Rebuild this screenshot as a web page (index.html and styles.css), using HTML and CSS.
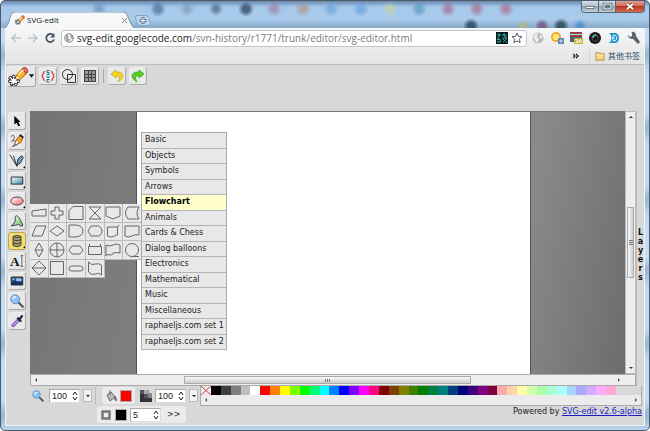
FILE: index.html
```html
<!DOCTYPE html>
<html lang="en">
<head>
<meta charset="utf-8">
<title>SVG-edit</title>
<link rel="stylesheet" href="styles.css">
</head>
<body>
<svg class="defs" aria-hidden="true">
  <defs>
    <linearGradient id="blue" x1="0" y1="0" x2="1" y2="1"><stop offset="0" stop-color="#fff"/><stop offset="1" stop-color="#3e8ea8"/></linearGradient>
    <linearGradient id="pink" x1="0" y1="0" x2="1" y2="1"><stop offset="0" stop-color="#fff"/><stop offset="1" stop-color="#f66"/></linearGradient>
    <linearGradient id="green" x1="0" y1="0" x2="1" y2="1"><stop offset="0" stop-color="#fff"/><stop offset="1" stop-color="#5fc05f"/></linearGradient>
    <symbol id="logo" viewBox="0 0 22 20">
      <path d="M7 13l3-6 6-6q3-1 4 2t-1 4l-6 6-5 3z" fill="#f7b52c" stroke="#a8540f"/>
      <path d="M15 2q3-3 5 0t-1 5z" fill="#ee6a7c" stroke="#a33"/>
      <path d="M11 8l5-5" stroke="#ffe98a" stroke-width="2"/>
      <path d="M7 14l2-4 3 3z" fill="#fff0c8"/>
      <g fill="#fff" stroke="#111"><circle cx="6" cy="10" r="1.6"/><circle cx="2.500" cy="11.500" r="1.600"/><circle cx="2" cy="15" r="1.600"/><circle cx="4" cy="18" r="1.600"/><circle cx="8" cy="18" r="1.600"/><circle cx="10.500" cy="15" r="1.600"/></g>
      <path d="M6 11v7M3 12l6 5M2 15h8M9 12l-6 6" stroke="#111" stroke-width="3"/>
      <path d="M6 11v7M3 12l6 5M2 15h8M9 12l-6 6" stroke="#fff" stroke-width="1.500"/>
    </symbol>
    <symbol id="glass" viewBox="0 0 16 16">
      <path d="M9.500 9.500l5 5" stroke="#555" stroke-width="2.500" stroke-linecap="round"/>
      <circle cx="6" cy="6" r="5" fill="#8fc3f7" stroke="#5c88b8"/>
      <path d="M3 6q1-3 4-3" stroke="#fff" stroke-width="1.500" fill="none"/>
    </symbol>
  </defs>
</svg>
<div class="window">
  <header class="titlebar">
    <div class="tab">
      <svg class="tab-shape" viewBox="0 0 131 16" preserveAspectRatio="none"><path d="M0 16q2-1 3-4l3-9q1-3 4-3h109q3 0 4 3l4 9q1 3 4 4" fill="#f5f7f9" stroke="#7f95ac"/></svg>
      <svg class="favicon"><use href="#logo"/></svg>
      <span class="tab-title">SVG-edit</span>
      <button class="tab-close" aria-label="Close tab"><svg viewBox="0 0 5 5"><path d="M0 0l5 5M5 0L0 5" stroke="#888"/></svg></button>
    </div>
    <button class="new-tab" aria-label="New tab"><svg viewBox="0 0 16 11"><path d="M1 .5h10q2 0 3 3l1.500 5q0 2-2 2H5q-2 0-3-3L.500 3z" fill="#bcd3ea" stroke="#8aa0b8"/><path d="M8 2v7M4.500 5.500h7" stroke="#6580a0" stroke-width="3"/><path d="M8 3v5M5.500 5.500h5" stroke="#fff"/></svg></button>
    <div class="win-buttons">
      <button aria-label="Minimize"><svg viewBox="0 0 16 11"><path d="M4 5.500h8v2H4z" fill="#fff" stroke="#566" stroke-width=".8"/></svg></button>
      <button aria-label="Maximize"><svg viewBox="0 0 16 11"><path d="M5 3h7v5H5z" fill="none" stroke="#566" stroke-width="2.500"/><path d="M5 3h7v5H5z" fill="#678" stroke="#fff"/></svg></button>
      <button class="win-close" aria-label="Close"><svg viewBox="0 0 28 11"><path d="M11 3l6 5M17 3l-6 5" stroke="#733" stroke-width="3"/><path d="M11 3l6 5M17 3l-6 5" stroke="#fff" stroke-width="1.800"/></svg></button>
    </div>
  </header>

  <div class="browser">
    <nav class="address-row">
      <button aria-label="Back"><svg viewBox="0 0 12 12"><path d="M11 6H2M6 2L2 6l4 4" stroke="#c3c6c9" stroke-width="1.600" fill="none"/></svg></button>
      <button aria-label="Forward"><svg viewBox="0 0 12 12"><path d="M1 6h9M6 2l4 4-4 4" stroke="#c3c6c9" stroke-width="1.600" fill="none"/></svg></button>
      <button aria-label="Reload"><svg viewBox="0 0 12 12"><path d="M9 3a4 4 0 1 0 1 4.500" stroke="#4a5566" stroke-width="1.800" fill="none"/><path d="M10.500 1v4.500H6z" fill="#4a5566"/></svg></button>
      <div class="omnibox">
        <svg class="i10" viewBox="0 0 10 10"><circle cx="5" cy="5" r="4.300" fill="#eee" stroke="#888"/><path d="M2 2q3 0 2 2t1 2-1 3L2 6zM6 1q1 2 3 2v3L7 5z" fill="#999"/></svg>
        <span class="url"><b>svg-edit.googlecode.com</b>/svn-history/r1771/trunk/editor/svg-editor.html</span>
        <svg class="i12" viewBox="0 0 12 12"><path d="M0 0h12v12H0z" fill="#061616"/><path d="M1 3h4M3 1v4l-2 3 3-1v3M1 10h4M6 3h5M8 1v3l3 2M6 6h5l-4 4M7 7l4 4" stroke="#29aaa0" fill="none"/></svg>
        <svg class="i12" viewBox="0 0 12 12"><path d="M6 1l1.500 3.300 3.500.4-2.600 2.400.7 3.500L6 8.900l-3.100 1.700.7-3.500L1 4.700l3.500-.4z" fill="#fff" stroke="#556"/></svg>
      </div>
      <div class="extensions">
        <svg viewBox="0 0 14 14"><circle cx="7" cy="7" r="5.500" fill="#bbb"/><path d="M2 6q2-4 5-4L6 6l2 2-2 4-2-3zM9 3l3 3-3 2z" fill="#eee"/></svg>
        <svg viewBox="0 0 14 14"><circle cx="6" cy="6" r="5" fill="#e9a526"/><circle cx="6" cy="6" r="3.300" fill="#ffe57b"/><rect x="8" y="7" width="6" height="6" rx="1" fill="#5e81b5"/><path d="M10 9h2v2h-2z" fill="none" stroke="#fff" stroke-width=".7"/></svg>
        <svg viewBox="0 0 14 14"><path d="M1 1h12v10H1z" fill="#49617e"/><path d="M1 2h12M1 5h12" stroke="#b92e43" stroke-width="1.500"/><path d="M1 3.500h12" stroke="#8fb"/><rect x="5" y="7" width="9" height="6" rx="1" fill="#c0b12b"/><text x="6" y="12" class="badge">20</text></svg>
        <svg viewBox="0 0 14 14"><circle cx="7" cy="7" r="6" fill="#191b20"/><circle cx="7" cy="7" r="3" fill="none" stroke="#444"/><path d="M5 7q0-3 3-3" stroke="#44d58b" stroke-width="1.500" fill="none"/><path d="M8 4l2 2" stroke="#d55"/></svg>
        <svg viewBox="0 0 14 14"><path d="M2 2h5q5 0 5 5t-5 5H2l2-2V4z" fill="#1d91c9"/><path d="M6 4v6M6 4q4 0 4 3t-4 3M4 7h4" stroke="#d9f4ff" fill="none"/></svg>
        <svg viewBox="0 0 14 14"><path d="M2 4l2 2 2-1V2L5 1q5-1 5 4l4 6-2 2-5-5Q2 8 2 4z" fill="#5b6471"/></svg>
      </div>
    </nav>
    <div class="bookmarks">
      <button class="more" aria-label="More bookmarks"><svg viewBox="0 0 6 6"><path d="M0 1l2 2-2 2M3 1l2 2-2 2" fill="none" stroke="#111" stroke-width="1.200"/></svg></button>
      <a href="#"><svg viewBox="0 0 11 9"><path d="M1 8.500h9v-7H5.500L4.500.5H1z" fill="#f9d789" stroke="#b68a39"/><path d="M1.500 3h8" stroke="#fff1c6"/></svg>其他书签</a>
    </div>

    <div class="toolbar">
      <button class="main-menu" aria-label="Main menu"><svg class="logo"><use href="#logo"/></svg><svg class="arrow" viewBox="0 0 6 4"><path d="M0 0h6L3 4z"/></svg></button>
      <button class="tool" aria-label="Edit source"><svg viewBox="0 0 16 16"><path d="M4.500 3L2 8l2.500 5M11.500 3L14 8l-2.500 5" fill="none" stroke="#d4373c" stroke-width="1.200"/><path d="M9.500 2.500H7v2h2v2H6.500M6.500 8L8 10l1.500-2M9.500 11.500H7v2.500h2.500" fill="none" stroke="#167b82"/></svg></button>
      <button class="tool" aria-label="Wireframe"><svg viewBox="0 0 16 16"><circle cx="6.500" cy="6.500" r="5" fill="none" stroke="#333"/><path d="M6.500 6.500h8v8h-8z" fill="none" stroke="#333"/></svg></button>
      <button class="tool" aria-label="Grid"><svg viewBox="0 0 16 16"><path d="M2 2h12v12H2z" fill="#999"/><path d="M2.500 2v12M6.500 2v12M9.500 2v12M13.500 2v12M2 2.500h12M2 6.500h12M2 9.500h12M2 13.500h12" stroke="#444"/></svg></button>
      <span class="divider"></span>
      <button class="tool" aria-label="Undo"><svg viewBox="0 0 16 16"><path d="M7 2L2 6l5 4V8q6-1 2 6 5-3 5-6 0-4-7-4z" fill="#f2d51c" stroke="#c9a822" stroke-width=".8"/></svg></button>
      <button class="tool" aria-label="Redo"><svg viewBox="0 0 16 16"><path d="M9 2l5 4-5 4V8Q3 7 7 14 2 11 2 8q0-4 7-4z" fill="#54ce27" stroke="#3eaa26" stroke-width=".8"/></svg></button>
    </div>

    <main class="editor">
      <div class="tools">
        <button class="tool" aria-label="Select"><svg viewBox="0 0 18 18"><path d="M6 3v10l2.500-2 2 4 2-1-2-4H13z"/></svg></button>
        <button class="tool" aria-label="Pencil"><svg viewBox="0 0 18 18"><path d="M2 4q4-3 4 1T3 9q5-1 4 2t-3 4 6-2" fill="none" stroke="#555"/><path d="M7 13l1-5 4-5 4 2-3 6z" fill="#f2a329" stroke="#854c15"/><path d="M7 13l1-4 3 2z" fill="#fff"/><path d="M12 2l4 3" stroke="#222" stroke-width="2"/></svg></button>
        <button class="tool more-tools" aria-label="Line"><svg viewBox="0 0 18 18"><path d="M1 2l8 13L5 3" stroke="#222" fill="none"/><path d="M9 14l1-7 4-4 2 2-3 6z" fill="#6fa0bd" stroke="#222"/></svg></button>
        <button class="tool more-tools" aria-label="Rectangle"><svg viewBox="0 0 18 18"><path d="M2.500 4.500h13v8h-13z" fill="url(#blue)" stroke="#222"/></svg></button>
        <button class="tool more-tools" aria-label="Ellipse"><svg viewBox="0 0 18 18"><ellipse cx="9" cy="9" rx="7" ry="4.500" fill="url(#pink)" stroke="#333"/></svg></button>
        <button class="tool" aria-label="Path"><svg viewBox="0 0 18 18"><path d="M2.500 14.500Q8 11 7 5q1-4 4 0 2 3 4 7l.5 2.500h-3q-1-3-4-1z" fill="url(#green)" stroke="#333"/></svg></button>
        <button class="tool active more-tools" aria-label="Shape library"><svg viewBox="0 0 18 18"><path d="M4.500 4v10q4.500 3 9 0V4q-4.500-3-9 0zM4.500 4q4.500 3 9 0M4.500 7.500q4.500 2.500 9 0M4.500 11q4.500 2.500 9 0" fill="#a9a56b" stroke="#333"/></svg></button>
        <button class="tool" aria-label="Text"><svg viewBox="0 0 18 18"><text x="1" y="15" class="text-glyph">A</text><path d="M13 3h3M14.500 3v12M13 15h3" stroke="#555" fill="none"/></svg></button>
        <button class="tool" aria-label="Image"><svg viewBox="0 0 18 18"><path d="M2.500 4.500h13v9h-13z" fill="#285694" stroke="#222"/><path d="M4 6h2v2H4zM8 6h6v3H8z" fill="#94c4e8"/><path d="M3 11l4-2 4 2 4-1v3H3z" fill="#122f5f"/></svg></button>
        <button class="tool" aria-label="Zoom"><svg viewBox="-1 -1 18 18"><use href="#glass" width="16" height="16"/></svg></button>
        <button class="tool" aria-label="Eyedropper"><svg viewBox="0 0 18 18"><path d="M3.500 15q-1-2 2-4l4-4 2 2-4 4q-1 3-4 2z" fill="#b68cef" stroke="#63339b"/><path d="M10 6l3 3M12 7l2.500-3.500" stroke="#241c33" stroke-width="2.500" stroke-linecap="round"/></svg></button>
      </div>

      <div class="workarea">
        <div class="canvas-view"><div class="page"></div></div>
        <div class="vscroll"><span class="up"></span><span class="vthumb"></span><span class="down"></span></div>
        <div class="hscroll"><span class="left"></span><span class="hthumb"></span><span class="right"></span></div>

        <div class="shapes">
          <button aria-label="Manual input"><svg viewBox="0 0 16 16"><path d="M1 6l14-2v7H1z"/></svg></button>
          <button aria-label="Cross"><svg viewBox="0 0 16 16"><path d="M6 2h4v4h4v4h-4v4H6v-4H2V6h4z"/></svg></button>
          <button aria-label="Card"><svg viewBox="0 0 16 16"><path d="M5 1.500h10v13H1v-9z"/></svg></button>
          <button aria-label="Collate"><svg viewBox="0 0 16 16"><path d="M2 2h12L2 14h12z"/></svg></button>
          <button aria-label="Off-page connector"><svg viewBox="0 0 16 16"><path d="M1 2h14v9l-7 3-7-3z"/></svg></button>
          <button aria-label="Stored data"><svg viewBox="0 0 16 16"><path d="M4 2h11q-4 6 0 12H4Q-1 8 4 2z"/></svg></button>
          <button aria-label="Data"><svg viewBox="0 0 16 16"><path d="M5 3h10l-4 10H1z"/></svg></button>
          <button aria-label="Decision"><svg viewBox="0 0 16 16"><path d="M8 3l7 5-7 5-7-5z"/></svg></button>
          <button aria-label="Delay"><svg viewBox="0 0 16 16"><path d="M1 2h7q7 1 7 6t-7 6H1z"/></svg></button>
          <button aria-label="Display"><svg viewBox="0 0 16 16"><path d="M4 3h8q3 2 3 5t-3 5H4L1 8z"/></svg></button>
          <button aria-label="Document"><svg viewBox="0 0 16 16"><path d="M2.500 4h10v8q-2 0-3 1-4 2-7 0zM12.500 4l2-2"/></svg></button>
          <button aria-label="Page"><svg viewBox="0 0 16 16"><path d="M1 3h14v9q-4-1-7 1-4 2-7 0z"/></svg></button>
          <button aria-label="Sort diamond"><svg viewBox="0 0 16 16"><path d="M8 1l4 7-4 7-4-7zM4 8h8"/></svg></button>
          <button aria-label="Or"><svg viewBox="0 0 16 16"><circle cx="8" cy="8" r="7"/><path d="M8 1v14M1 8h14"/></svg></button>
          <button aria-label="Preparation"><svg viewBox="0 0 16 16"><path d="M4 4h8l3 4-3 4H4L1 8z"/></svg></button>
          <button aria-label="Process"><svg viewBox="0 0 16 16"><path d="M1.500 4.500h13v8h-13zM2.500 2v2M13.500 2v2"/></svg></button>
          <button aria-label="Tape"><svg viewBox="0 0 16 16"><path d="M1 3q4 2 7 0t7 0v8q-4-1-7 0-1 3-3 2-2-2-4 1z"/></svg></button>
          <button aria-label="Sequential data"><svg viewBox="0 0 16 16"><circle cx="8" cy="8" r="6.500"/><path d="M9 14.500h6"/></svg></button>
          <button aria-label="Sort"><svg viewBox="0 0 16 16"><path d="M8 1l7 7-7 7-7-7zM1 8h14"/></svg></button>
          <button aria-label="Square"><svg viewBox="0 0 16 16"><path d="M1.500 1.500h13v13h-13z"/></svg></button>
          <button aria-label="Terminator"><svg viewBox="0 0 16 16"><rect x="1" y="6" width="14" height="5" rx="2.500"/></svg></button>
          <button aria-label="Punched tape"><svg viewBox="0 0 16 16"><path d="M1.500 2q3 4 7 2 3-1 6 1v10q-3-3-6-1-4 2-7-2z"/></svg></button>
        </div>
        <div class="categories">
          <button>Basic</button><button>Objects</button><button>Symbols</button><button>Arrows</button><button class="current">Flowchart</button><button>Animals</button><button>Cards &amp; Chess</button><button>Dialog balloons</button><button>Electronics</button><button>Mathematical</button><button>Music</button><button>Miscellaneous</button><button>raphaeljs.com set 1</button><button>raphaeljs.com set 2</button>
        </div>
      </div>

      <aside class="side"><button class="layers" aria-label="Layers"><span>L</span><span>a</span><span>y</span><span>e</span><span>r</span><span>s</span></button></aside>
    </main>

    <footer class="bottom">
      <div class="controls">
        <div class="control-row">
          <div class="group zoom-group">
            <label for="zoom"><svg class="i12" aria-label="Zoom level"><use href="#glass"/></svg></label>
            <span class="field"><input id="zoom" value="100"><svg viewBox="0 0 6 10"><path d="M1 4l2-3 2 3M1 6l2 3 2-3"/></svg></span>
            <button class="drop" aria-label="Zoom presets"></button>
          </div>
          <div class="group boxed">
            <svg class="i12" viewBox="0 0 12 12"><path d="M2 5l4-3 4 5-5 4z" fill="#bbb" stroke="#666"/><path d="M5 5V0M10 6q2 3 1 5-2-1-1-5" stroke="#666" fill="#777"/></svg>
            <button class="swatch fill" aria-label="Fill colour"></button>
          </div>
          <div class="group">
            <label for="opacity"><svg class="i12" viewBox="0 0 12 12" aria-label="Opacity"><path d="M0 0h12v12H0z" fill="#333"/><path d="M4 0h8v4H4z" fill="#aaa"/><path d="M8 0h4v8H8z" fill="#888"/><path d="M4 4h4v4H4z" fill="#555"/><path d="M0 0h4v4H0z" fill="#555"/><path d="M9 0h3v3H9z" fill="#ddd"/></svg></label>
            <span class="field"><input id="opacity" value="100"><svg viewBox="0 0 6 10"><path d="M1 4l2-3 2 3M1 6l2 3 2-3"/></svg></span>
            <button class="drop" aria-label="Opacity presets"></button>
          </div>
        </div>
        <div class="control-row stroke-row">
          <div class="group boxed">
            <svg class="i12" viewBox="0 0 12 12"><path d="M2.500 2.500h7v7h-7z" fill="#eee" stroke="#777" stroke-width="2.500"/></svg>
            <button class="swatch stroke" aria-label="Stroke colour"></button>
            <span class="field"><input id="stroke-width" aria-label="Stroke width" value="5"><svg viewBox="0 0 6 10"><path d="M1 4l2-3 2 3M1 6l2 3 2-3"/></svg></span>
            <button class="expand">&gt;&gt;</button>
          </div>
        </div>
      </div>
      <div class="palette-column">
        <div class="palette-box">
          <div class="palette" id="palette"><button class="none" aria-label="No colour"><svg viewBox="0 0 10 9" preserveAspectRatio="none"><path d="M0 0l10 9M10 0L0 9" stroke="#c44"/></svg></button></div>
          <div class="palette-scroll"><span class="left"></span><span class="right"></span></div>
        </div>
        <p class="credit">Powered by <a href="#">SVG-edit v2.6-alpha</a></p>
      </div>
    </footer>
  </div>
</div>
<script src="palette.js"></script>
</body>
</html>
```
FILE: palette.js
```js
const colours = [
  "#000000", "#3f3f3f", "#7f7f7f", "#bfbfbf", "#ffffff",
  "#ff0000", "#ff7f00", "#ffff00", "#7fff00", "#00ff00", "#00ff7f", "#00ffff", "#007fff", "#0000ff", "#7f00ff", "#ff00ff", "#ff007f",
  "#7f0000", "#7f3f00", "#7f7f00", "#3f7f00", "#007f00", "#007f3f", "#007f7f", "#003f7f", "#00007f", "#3f007f", "#7f007f", "#7f003f",
  "#ffaaaa", "#ffd4aa", "#ffffaa", "#d4ffaa", "#aaffaa", "#aaffd4", "#aaffff", "#aad4ff", "#aaaaff", "#d4aaff", "#ffaaff", "#ffaad4"
];
const palette = document.getElementById("palette");
for (const colour of colours) {
  const cell = document.createElement("button");
  cell.style.background = colour;
  cell.setAttribute("aria-label", colour);
  palette.append(cell);
}
```
FILE: styles.css
```css
* { box-sizing: border-box; }
body { margin: 0; font: 9px/12px "DejaVu Sans", sans-serif; color: #222; }
button { margin: 0; padding: 0; border: 0; background: none; font: inherit; color: inherit; }
svg { display: block; }
.defs { position: absolute; width: 0; height: 0; }

.window {
  display: flex;
  flex-direction: column;
  min-height: 100vh;
  padding: 0 4px 4px;
  border: 1px solid #4c5a69;
  border-radius: 5px;
  background:
    radial-gradient(circle at 98px 8px, #4a80b490 1px, transparent 8px),
    radial-gradient(circle at 157px 8px, #37568290 3px, transparent 8px),
    radial-gradient(circle at 186px 8px, #7088a890 1px, transparent 8px),
    radial-gradient(circle at 215px 8px, #33486890 2px, transparent 7px),
    radial-gradient(circle at 245px 8px, #30435fc0 3px, transparent 8px),
    radial-gradient(circle at 273px 8px, #a0709090 2px, transparent 8px),
    radial-gradient(circle at 302px 8px, #b0887090 2px, transparent 8px),
    radial-gradient(circle at 330px 8px, #609cdb90 3px, transparent 8px),
    radial-gradient(circle at 360px 8px, #609cdb90 3px, transparent 8px),
    radial-gradient(circle at 389px 8px, #d0d69090 2px, transparent 8px),
    radial-gradient(circle at 418px 8px, #4a91b890 3px, transparent 8px),
    radial-gradient(circle at 447px 8px, #a7557590 2px, transparent 8px),
    radial-gradient(circle at 476px 8px, #a7557590 2px, transparent 8px),
    radial-gradient(circle at 505px 8px, #a7557590 2px, transparent 8px),
    radial-gradient(circle at 470px 25px, #234455d0 3px, transparent 8px),
    radial-gradient(circle at 522px 25px, #b8b870a0 2px, transparent 7px),
    radial-gradient(circle at 541px 25px, #703a5ca0 3px, transparent 7px),
    radial-gradient(circle at 560px 25px, #234445d0 3px, transparent 8px),
    radial-gradient(circle at 579px 25px, #3080c0a0 2px, transparent 7px),
    linear-gradient(#6888ae, #a5c8ea 6px, #a9cbec 18px, #89a9cb 27px, transparent 27px),
    repeating-linear-gradient(#c3dcf3 0 40px, #9ab8d6 52px 56px, #c3dcf3 72px);
}
.titlebar { display: flex; height: 27px; align-items: flex-end; }
.tab { position: relative; display: flex; align-items: center; width: 130px; height: 16px; padding: 0 8px 0 10px; gap: 2px; }
.tab-shape { position: absolute; inset: 0; width: 100%; height: 100%; }
.favicon { position: relative; width: 10px; height: 10px; }
.tab-title { position: relative; flex: 1; font: 8px/12px "Open Sans", sans-serif; }
.tab-close { position: relative; width: 5px; height: 5px; }
.tab-close svg { width: 5px; height: 5px; overflow: visible; }
.new-tab { width: 16px; height: 11px; margin-bottom: 2px; }
.win-buttons { display: flex; align-self: flex-start; margin-left: auto; border: 1px solid #5b6675; border-top: 0; border-radius: 0 0 4px 4px; overflow: hidden; }
.win-buttons button { width: 17px; height: 11px; border-right: 1px solid #5b6675; background: linear-gradient(#d7e1ed, #aab9ca 50%, #94a6b9 50%, #c1cedb); }
.win-buttons .win-close { width: 28px; border: 0; background: linear-gradient(#dfa093, #cf6752 50%, #b83923 50%, #d56b4d); }
.win-buttons svg { width: 100%; height: 11px; }

.browser { display: flex; flex: 1; flex-direction: column; border: 1px solid #f1f5f8; border-top: 0; background: #d8d8d8; }
.address-row { display: flex; align-items: center; height: 20px; padding: 0 4px; background: linear-gradient(#f6f7f8, #ececec); }
.address-row > button { width: 12px; height: 12px; margin-right: 5px; }
.omnibox { display: flex; flex: 1; align-items: center; gap: 3px; height: 17px; padding: 0 3px 0 2px; border: 1px solid #c3c5c7; border-radius: 3px; background: #fff; }
.i10 { width: 10px; height: 10px; flex: none; }
.i12 { width: 12px; height: 12px; flex: none; }
.url { flex: 1; overflow: hidden; white-space: nowrap; color: #7c7c7c; font: 10px/15px "Open Sans", sans-serif; }
.url b { color: #222; font-weight: 400; }
.extensions { display: flex; gap: 5px; margin-left: 4px; }
.extensions svg { width: 14px; height: 14px; }
.badge { fill: #fff; font: bold 5px "DejaVu Sans", sans-serif; }
.bookmarks { display: flex; justify-content: flex-end; align-items: center; gap: 10px; height: 17px; padding-right: 4px; border-bottom: 1px solid #bbbdc3; background: linear-gradient(#ececec, #e4e4e4); }
.bookmarks .more { width: 6px; height: 12px; }
.bookmarks a { display: flex; align-items: center; gap: 3px; padding-left: 5px; border-left: 1px solid #d2d2d2; color: #33486b; font: 8px/12px "Noto Sans CJK SC", sans-serif; text-decoration: none; }
.bookmarks a svg { width: 10px; height: 9px; }

.toolbar { display: flex; align-items: center; gap: 3px; height: 46px; padding: 0 1px 24px; }
.tool, .main-menu { position: relative; border: 1px solid #efefef; border-right-color: #aaa; border-bottom-color: #aaa; border-radius: 3px; background: #e8e8e8; }
.tool { width: 18px; height: 18px; flex: none; }
.tool svg { width: 16px; height: 16px; }
.text-glyph { font: bold 15px "Liberation Serif", serif; fill: #111; }
.main-menu { display: flex; align-items: center; width: 29px; height: 21px; }
.logo { width: 21px; height: 19px; }
.arrow { width: 5px; height: 4px; }
.divider { width: 1px; height: 14px; margin: 0 1px; background: #aaa; }

.editor { display: flex; flex: 1; min-height: 0; }
.tools { display: flex; flex-direction: column; gap: 2px; width: 24px; padding: 1px 0 0 2px; }
.more-tools::after { content: ""; position: absolute; right: 0; bottom: 1px; border: 1px solid #000; border-top-color: transparent; border-left-color: transparent; }
.active { border-color: #b6a45a; background: #f7dc72; }
.workarea { position: relative; display: grid; flex: 1; grid-template: 1fr 12px / 1fr 11px; }
.canvas-view { display: grid; grid-template-columns: 105px 1fr 94px; border: 1px solid #777; border-width: 1px 0 0 1px; background: linear-gradient(100deg, #737373, #7c7c7c 18%, #8a8a8a 80%, #6c6c6c); }
.page { grid-column: 2; border: 1px solid #555; border-width: 0 1px; background: #fff; }
.vscroll { display: flex; flex-direction: column; align-items: center; padding: 4px 1px; border: 1px solid #bbb; background: #eee; }
.vthumb { width: 100%; height: 71px; margin: auto 0; border: 1px solid #aaa; background: linear-gradient(#777 1px, transparent 1px 2px, #777 2px 3px, transparent 3px 4px, #777 4px) center / 4px 5px no-repeat, linear-gradient(90deg, #fafafa, #ccc); }
.up, .down, .left, .right { width: 0; height: 0; border: 2px solid transparent; }
.up { border-top: 0; border-bottom-color: #333; }
.down { border-bottom: 0; border-top-color: #333; }
.left { border-left: 0; border-right-color: #555; }
.right { border-right: 0; border-left-color: #555; }
.hscroll { display: flex; align-items: center; grid-column: 1 / 3; padding: 1px 15px 1px 4px; border: 1px solid #aaa; background: #eee; }
.hthumb { width: 49%; height: 100%; margin: 0 auto; border: 1px solid #aaa; background: linear-gradient(90deg, #777 1px, transparent 1px 2px, #777 2px 3px, transparent 3px 4px, #777 4px) center / 5px 3px no-repeat, linear-gradient(#fafafa, #ccc); }

.shapes { position: absolute; left: 0; top: 93px; display: grid; grid-template-columns: repeat(6, 1fr); width: 112px; height: 74px; }
.shapes button { display: grid; place-items: center; border: 1px solid #bbb; border-width: 0 1px 1px 0; background: #e8e8e8; }
.shapes svg { width: 16px; height: 16px; fill: none; stroke: #666; stroke-width: 1; }
.categories { position: absolute; left: 111px; top: 21px; display: grid; grid-template-columns: minmax(0, 1fr); grid-auto-rows: 1fr; width: 86px; height: 218px; border: 1px solid #aaa; border-bottom: 0; background: #e8e8e8; }
.categories button { padding: 0 3px; border-bottom: 1px solid #b4b4b4; font: 8px/12px "DejaVu Sans", sans-serif; text-align: left; white-space: nowrap; }
.categories .current { background: #ffc; color: #000; font-weight: 700; }
.side { display: flex; width: 8px; align-items: center; border-left: 1px solid #bbb; background: #d8d8d8; }
.layers { display: flex; flex-direction: column; align-items: center; width: 7px; padding-top: 12px; font: bold 8px/9px "DejaVu Sans", sans-serif; color: #111; }

.bottom { display: flex; height: 39px; padding-right: 2px; }
.controls { display: flex; flex-direction: column; gap: 2px; width: 194px; padding: 1px 2px 0 26px; }
.control-row { display: flex; justify-content: space-between; }
.stroke-row { padding-left: 65px; }
.group { display: flex; align-items: center; gap: 3px; height: 17px; }
.zoom-group { padding-right: 3px; border-right: 1px solid #bbb; }
.zoom-group label { margin-right: 2px; }
.boxed { gap: 3px; padding: 0 3px; border-radius: 3px; background: #ebebeb; }
.field { display: flex; align-items: center; width: 31px; height: 14px; border: 1px solid #aaa; border-right-color: #ddd; border-bottom-color: #ddd; background: #fff; }
.field input { flex: 1; min-width: 0; padding: 0 0 0 2px; border: 0; outline: 0; background: none; color: #222; font: 9px/12px "Liberation Sans", sans-serif; }
.field svg { width: 6px; height: 10px; margin-right: 1px; fill: none; stroke: #222; stroke-width: 1; }
.drop { display: grid; place-items: center; width: 9px; height: 13px; border: 1px solid #bbb; background: #f2f2f2; }
.drop::after { content: ""; border: 2px solid transparent; border-top-color: #222; border-bottom: 0; }
.swatch { width: 12px; height: 12px; border: 1px solid #aaa; }
.fill { background: #f00; }
.stroke { background: #000; }
.expand { padding: 0 3px; font-size: 8px; }
.palette-column { flex: 1; min-width: 0; }
.palette-box { border: 1px solid #aaa; border-top: 0; background: #d8d8d8; }
.palette { display: grid; grid-template-columns: repeat(42, 1fr); height: 9px; margin-right: 25px; }
.palette button { min-width: 0; }
.palette .none { background: #eee; }
.none svg { width: 100%; height: 9px; }
.palette-scroll { display: flex; justify-content: space-between; align-items: center; height: 10px; padding: 0 4px; background: #ececec; }
.credit { margin: 0; text-align: right; font: 8px/12px "DejaVu Sans", sans-serif; }
.credit a { color: #1b1bc4; }
```
